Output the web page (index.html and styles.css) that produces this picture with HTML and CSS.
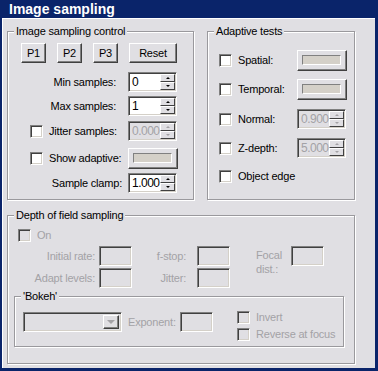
FILE: index.html
```html
<!DOCTYPE html>
<html>
<head>
<meta charset="utf-8">
<link rel="stylesheet" href="styles.css">
</head>
<body>
<div class="window">
  <div class="titlebar">Image sampling</div>
  <div class="client">
    <div class="top-row">
      <fieldset class="group group-isc">
        <legend>Image sampling control</legend>
        <div class="btn-row">
          <button class="btn btn-p">P1</button>
          <button class="btn btn-p">P2</button>
          <button class="btn btn-p">P3</button>
          <button class="btn btn-reset">Reset</button>
        </div>
        <div class="row row-min">
          <span class="lbl lbl-r12">Min samples:</span>
          <div class="spin"><span class="spin-val">0</span><span class="spin-btns"><span class="sb sb-up"></span><span class="sb sb-dn"></span></span></div>
        </div>
        <div class="row row-max">
          <span class="lbl lbl-r12">Max samples:</span>
          <div class="spin"><span class="spin-val">1</span><span class="spin-btns"><span class="sb sb-up"></span><span class="sb sb-dn"></span></span></div>
        </div>
        <div class="row row-check row-jitter">
          <span class="cb"></span>
          <span class="lbl lbl-check">Jitter samples:</span>
          <div class="spin spin-dis"><span class="spin-val">0.000</span><span class="spin-btns"><span class="sb sb-up"></span><span class="sb sb-dn"></span></span></div>
        </div>
        <div class="row row-check row-show">
          <span class="cb"></span>
          <span class="lbl lbl-check">Show adaptive:</span>
          <div class="cbtn cbtn-left"><span class="swatch"></span></div>
        </div>
        <div class="row row-clamp">
          <span class="lbl lbl-r6">Sample clamp:</span>
          <div class="spin"><span class="spin-val">1.000</span><span class="spin-btns"><span class="sb sb-up"></span><span class="sb sb-dn"></span></span></div>
        </div>
      </fieldset>
      <fieldset class="group group-adapt">
        <legend>Adaptive tests</legend>
        <div class="arow arow-spatial">
          <span class="cb"></span>
          <span class="lbl lbl-check">Spatial:</span>
          <div class="cbtn"><span class="swatch"></span></div>
        </div>
        <div class="arow arow-temporal">
          <span class="cb"></span>
          <span class="lbl lbl-check">Temporal:</span>
          <div class="cbtn"><span class="swatch"></span></div>
        </div>
        <div class="arow arow-normal">
          <span class="cb"></span>
          <span class="lbl lbl-check">Normal:</span>
          <div class="spin spin-dis spin-narrow"><span class="spin-val">0.900</span><span class="spin-btns"><span class="sb sb-up"></span><span class="sb sb-dn"></span></span></div>
        </div>
        <div class="arow arow-zdepth">
          <span class="cb"></span>
          <span class="lbl lbl-check">Z-depth:</span>
          <div class="spin spin-dis spin-narrow"><span class="spin-val">5.000</span><span class="spin-btns"><span class="sb sb-up"></span><span class="sb sb-dn"></span></span></div>
        </div>
        <div class="arow arow-edge">
          <span class="cb"></span>
          <span class="lbl lbl-check">Object edge</span>
        </div>
      </fieldset>
    </div>
    <fieldset class="group group-dof">
      <legend>Depth of field sampling</legend>
      <div class="on-row">
        <span class="cb cb-dis"></span>
        <span class="lbl lbl-check dis">On</span>
      </div>
      <div class="dof-grid">
        <span class="glbl glbl-1 dis">Initial rate:</span>
        <span class="tbox"></span>
        <span class="glbl glbl-2 dis">f-stop:</span>
        <span class="tbox"></span>
        <span class="glbl-focal dis">Focal<br>dist.:</span>
        <span class="tbox"></span>
        <span class="glbl glbl-1 dis">Adapt levels:</span>
        <span class="tbox"></span>
        <span class="glbl glbl-2 dis">Jitter:</span>
        <span class="tbox"></span>
      </div>
      <fieldset class="group group-bokeh">
        <legend>'Bokeh'</legend>
        <div class="bokeh-body">
          <div class="combo"><span class="combo-val"></span><span class="combo-btn"><span class="combo-arrow"></span></span></div>
          <span class="exp-lbl dis">Exponent:</span>
          <span class="tbox tbox-exp"></span>
          <div class="bchecks">
            <div class="bcheck"><span class="cb cb-dis"></span><span class="lbl lbl-check dis">Invert</span></div>
            <div class="bcheck"><span class="cb cb-dis"></span><span class="lbl lbl-check dis">Reverse at focus</span></div>
          </div>
        </div>
      </fieldset>
    </fieldset>
  </div>
</div>
</body>
</html>
```

FILE: styles.css
```css
* { box-sizing: border-box; }
body {
  margin: 0;
  font-family: "Liberation Sans", Arial, sans-serif;
  font-size: 11px;
  line-height: 13px;
  letter-spacing: -0.2px;
  color: #000;
  background: #fff;
}
.window {
  width: 378px;
  height: 371px;
  background: #0a246a;
  padding: 0 3px 3px 2px;
  display: flex;
  flex-direction: column;
}
.titlebar {
  height: 18px;
  flex: none;
  color: #fff;
  font-weight: bold;
  font-size: 14px;
  letter-spacing: 0;
  line-height: 18px;
  padding-left: 7px;
}
.client {
  flex: 1;
  background: #e0dfe3;
  border-left: 1px solid #fff;
  border-top: 1px solid #fff;
  padding: 6px 0 0 4px;
}
.dis { color: #a3a2a6; }

.top-row { display: flex; gap: 13px; }

.group {
  margin: 0;
  padding: 0;
  border: 1px solid #9a999d;
  box-shadow: inset 1px 1px 0 #fff, 1px 1px 0 #fff;
  min-width: 0;
}
.group legend {
  padding: 0 2px;
  margin-left: 6px;
  line-height: 13px;
  background: #e0dfe3;
}
.group-isc { width: 187px; height: 175px; }
.group-adapt { width: 148px; height: 175px; }
.group-dof { width: 348px; height: 155px; margin-top: 9px; }
.group-bokeh { width: 330px; height: 57px; margin: 2px 0 0 6px; }

/* buttons */
.btn {
  font: inherit;
  letter-spacing: inherit;
  color: #000;
  background: #e0dfe3;
  height: 20px;
  padding: 0;
  border: 1px solid;
  border-color: #fff #404040 #404040 #fff;
  box-shadow: inset -1px -1px 0 #808080;
}
.btn-row { display: flex; gap: 11px; margin: 5px 0 0 13px; height: 20px; }
.btn-p { width: 25px; }
.btn-reset { width: 48px; }

/* rows in left group */
.row { display: flex; align-items: center; height: 20px; padding-right: 16px; }
.row-min { margin-top: 9px; }
.row-max { margin-top: 4px; }
.row-jitter { margin-top: 5px; }
.row-show { margin-top: 7px; height: 21px; }
.row-clamp { margin-top: 4px; }
.row-check { padding-left: 22px; }
.row-check .spin, .row-check .cbtn { margin-left: auto; }
.lbl { white-space: nowrap; }
.lbl-r12 { margin-left: auto; margin-right: 12px; }
.lbl-r6 { margin-left: auto; margin-right: 6px; }
.lbl-check { margin-left: 6px; }
.cbtn-left { margin-right: -1px; }

/* adaptive rows */
.arow { display: flex; align-items: center; padding: 0 7px 0 11px; }
.arow .cbtn, .arow .spin { margin-left: auto; }
.arow-spatial { margin-top: 12px; height: 21px; }
.arow-temporal { margin-top: 8px; height: 21px; }
.arow-normal { margin-top: 9px; height: 20px; }
.arow-zdepth { margin-top: 9px; height: 20px; }
.arow-edge { margin-top: 12px; height: 13px; }
.spin-narrow { width: 47px; margin-right: 1px; }

/* checkbox */
.cb {
  flex: none;
  width: 13px;
  height: 13px;
  border: 1px solid;
  border-color: #808080 #fff #fff #808080;
  box-shadow: inset 1px 1px 0 #404040, inset -1px -1px 0 #d4d0c8;
  background: #fff;
}
.cb-dis { background: #e0dfe3; }

/* spinner */
.spin {
  flex: none;
  display: flex;
  width: 49px;
  height: 20px;
  border: 1px solid;
  border-color: #808080 #fff #fff #808080;
  box-shadow: inset 1px 1px 0 #404040, inset -1px -1px 0 #d4d0c8;
  background: #fff;
  padding: 1px;
}
.spin-val {
  flex: 1;
  padding-left: 2px;
  font-size: 12px;
  line-height: 16px;
  letter-spacing: -0.5px;
  overflow: hidden;
  white-space: nowrap;
}
.spin-dis { background: #e0dfe3; }
.spin-dis .spin-val { color: #a3a2a6; }
.spin-btns { flex: none; width: 15px; display: flex; flex-direction: column; }
.sb {
  flex: 1;
  display: flex;
  align-items: center;
  justify-content: center;
  background: #e0dfe3;
  border: 1px solid;
  border-color: #fff #404040 #404040 #fff;
}
.sb::after { content: ""; width: 0; height: 0; border-left: 2px solid transparent; border-right: 2px solid transparent; }
.sb-up::after { border-bottom: 2px solid #000; }
.sb-dn::after { border-top: 2px solid #000; }
.spin-dis .sb-up::after { border-bottom-color: #a3a2a6; }
.spin-dis .sb-dn::after { border-top-color: #a3a2a6; }

/* colour button */
.cbtn {
  flex: none;
  width: 50px;
  height: 21px;
  background: #e0dfe3;
  border: 1px solid;
  border-color: #fff #404040 #404040 #fff;
  box-shadow: inset -1px -1px 0 #808080;
  padding: 4px 5px 5px 4px;
  display: flex;
}
.swatch {
  flex: 1;
  border: 1px solid;
  border-color: #808080 #fff #fff #808080;
  background: #d4d0c8;
}

/* depth of field */
.on-row { display: flex; align-items: center; height: 13px; margin: 7px 0 0 10px; }
.dof-grid {
  display: grid;
  grid-template-columns: 91px 33px 65px 33px 61px 33px;
  grid-template-rows: 20px 20px;
  row-gap: 2px;
  margin-top: 4px;
}
.glbl { text-align: right; line-height: 20px; white-space: nowrap; }
.glbl-1 { padding-right: 4px; grid-column: 1; }
.glbl-2 { padding-right: 11px; grid-column: 3; }
.glbl-focal { grid-column: 5; grid-row: 1 / span 2; padding-left: 26px; line-height: 14px; padding-top: 2px; white-space: nowrap; }
.glbl-focal + .tbox { grid-column: 6; grid-row: 1; }
.tbox {
  display: block;
  width: 33px;
  height: 20px;
  border: 1px solid;
  border-color: #808080 #fff #fff #808080;
  box-shadow: inset 1px 1px 0 #404040, inset -1px -1px 0 #d4d0c8;
  background: #e0dfe3;
}

/* bokeh */
.bokeh-body { display: flex; align-items: flex-start; padding-left: 8px; }
.combo {
  flex: none;
  display: flex;
  width: 99px;
  height: 20px;
  margin-top: 9px;
  border: 1px solid;
  border-color: #808080 #fff #fff #808080;
  box-shadow: inset 1px 1px 0 #404040, inset -1px -1px 0 #d4d0c8;
  background: #e0dfe3;
  padding: 2px;
}
.combo-val { flex: 1; }
.combo-btn {
  width: 16px;
  display: flex;
  align-items: center;
  justify-content: center;
  background: #e0dfe3;
  border: 1px solid;
  border-color: #fff #404040 #404040 #fff;
  box-shadow: inset -1px -1px 0 #808080;
}
.combo-arrow { width: 0; height: 0; border-left: 4px solid transparent; border-right: 4px solid transparent; border-top: 4px solid #a3a2a6; }
.exp-lbl { width: 52px; margin: 9px 0 0 6px; line-height: 20px; white-space: nowrap; }
.tbox-exp { margin-top: 9px; }
.bchecks { margin: 8px 0 0 24px; display: flex; flex-direction: column; gap: 4px; }
.bcheck { display: flex; align-items: center; height: 13px; }
```
